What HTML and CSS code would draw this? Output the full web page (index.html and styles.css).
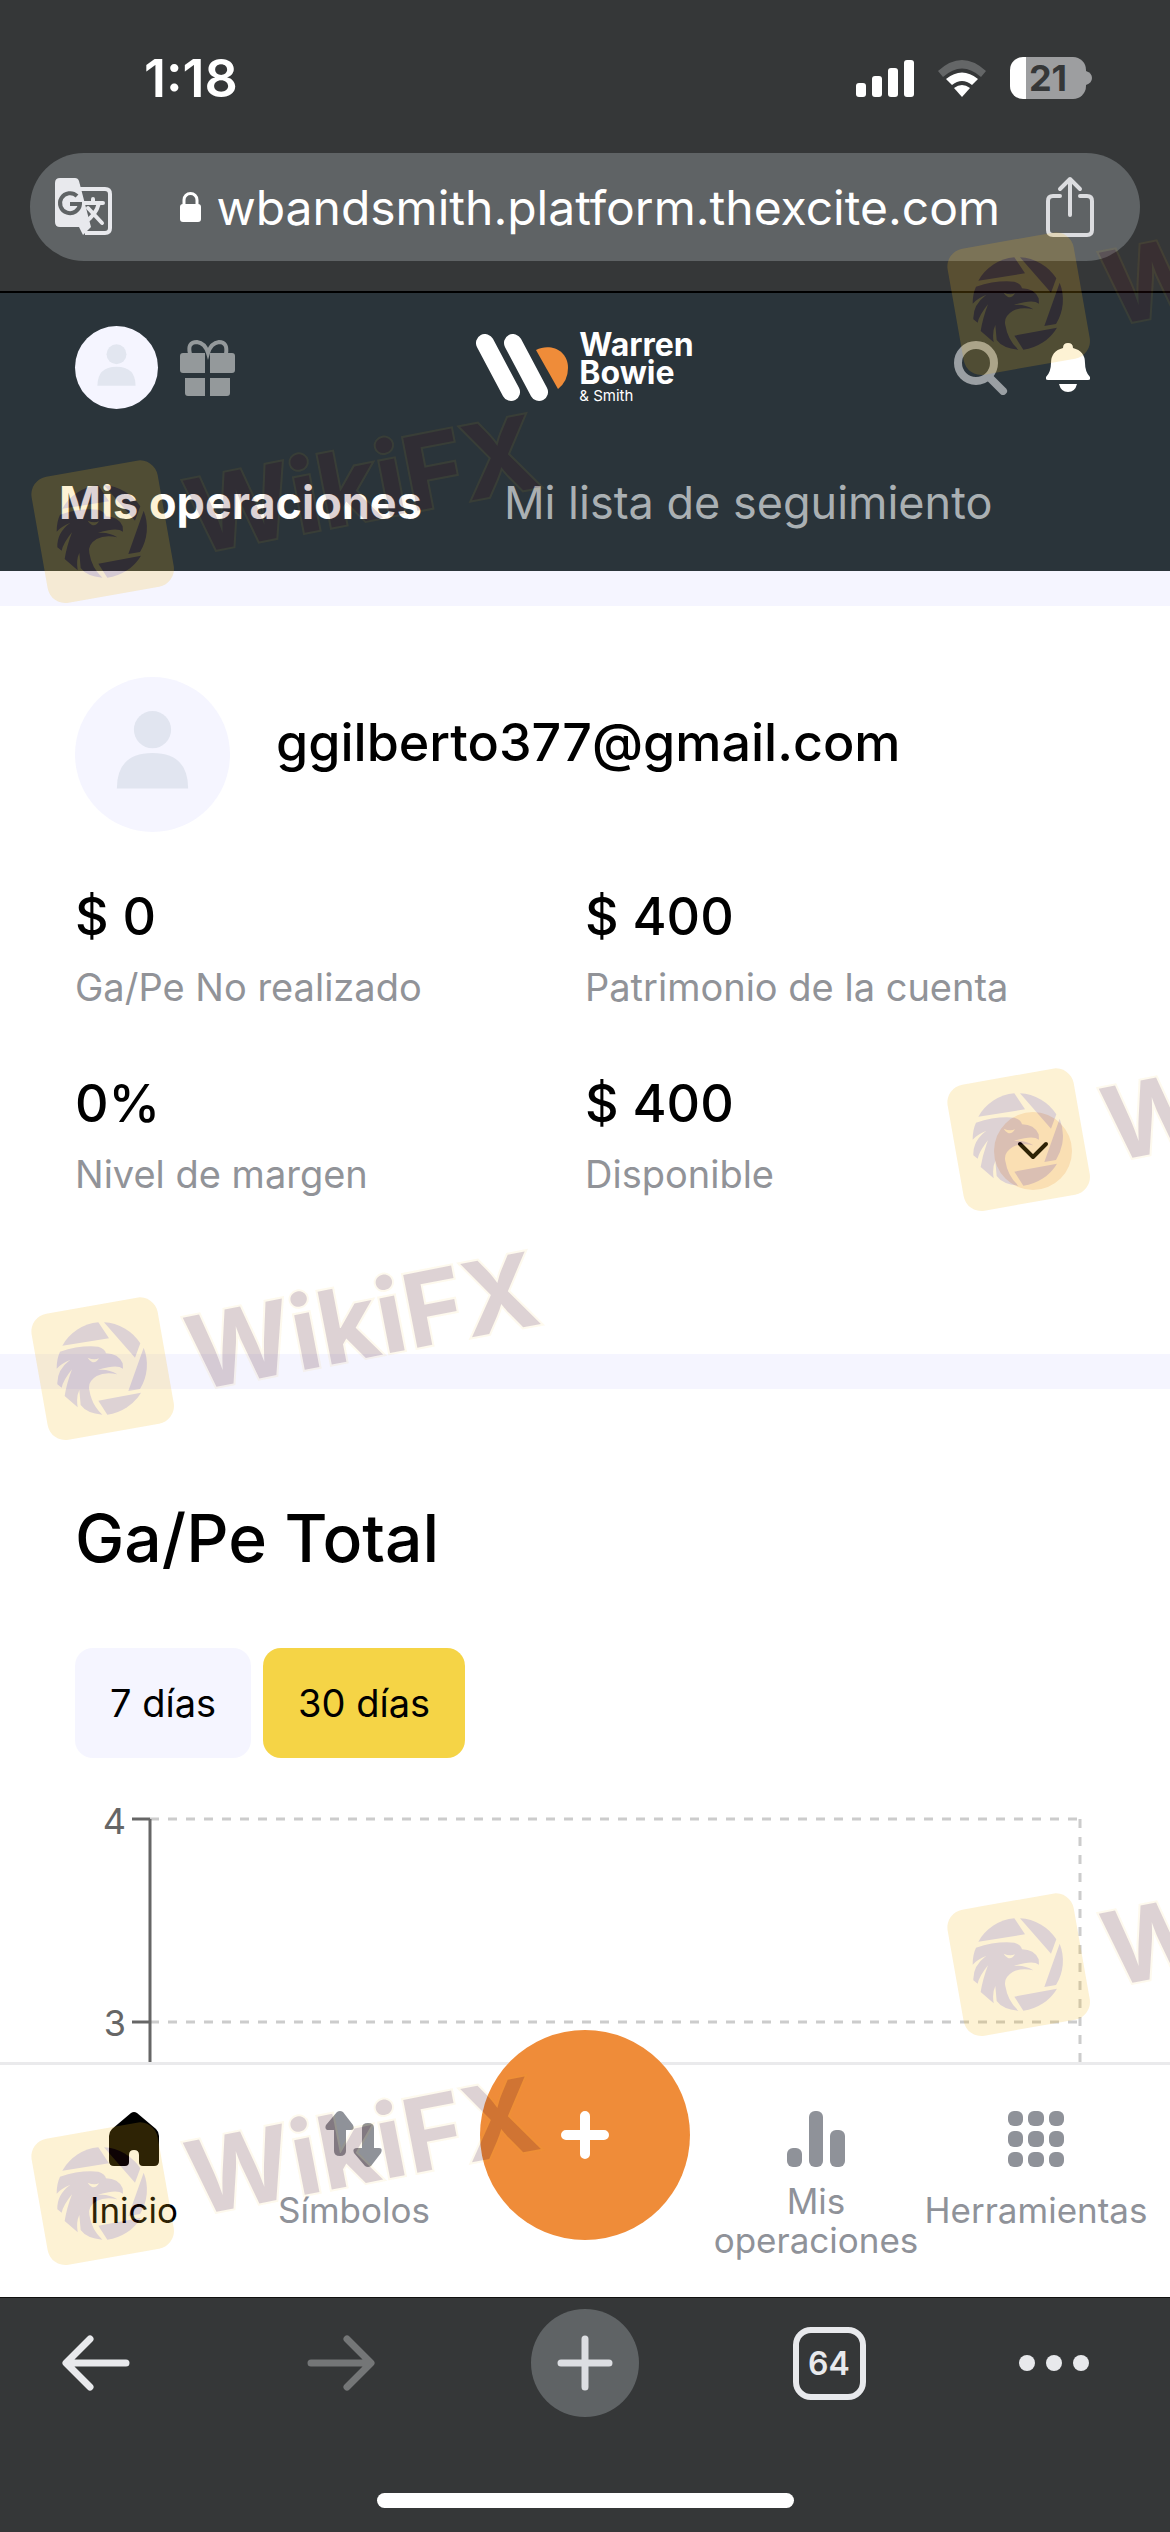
FILE: index.html
```html
<!DOCTYPE html>
<html lang="es">
<head>
    <meta charset="UTF-8">
    <meta name="viewport" content="width=device-width, initial-scale=1.0">
    <title>Warren Bowie &amp; Smith</title>
    <link rel="stylesheet" href="styles.css">
</head>
<body>

<!-- Browser top -->
<div class="browser-top">
    <div class="status-bar">
        <span class="time">1:18</span>
        <div class="status-icons">
            <svg width="58" height="38" viewBox="0 0 58 38" fill="#fff">
                <rect x="0" y="24" width="10" height="14" rx="3"/>
                <rect x="16" y="17" width="10" height="21" rx="3"/>
                <rect x="32" y="9" width="10" height="29" rx="3"/>
                <rect x="48" y="1" width="10" height="37" rx="3"/>
            </svg>
            <svg class="wifi" width="50" height="38" viewBox="0 0 50 38">
                <path d="M1 12 Q25 -10 49 12 L44 18 Q25 1 6 18 Z" fill="#646667"/>
                <path d="M9 20 Q25 7 41 20 L35 26 Q25 18 15 26 Z" fill="#fff"/>
                <path d="M17 29 Q25 23 33 29 L25 38 Z" fill="#fff"/>
            </svg>
            <div class="battery"><span>21</span></div>
            <svg width="6" height="14" viewBox="0 0 6 14"><path d="M0 0 Q6 2 6 7 Q6 12 0 14 Z" fill="#9d9ea0"/></svg>
        </div>
    </div>
    <div class="url-bar">
        <button class="icon-btn" aria-label="Traducir">
            <svg width="58" height="58" viewBox="0 0 58 58">
                <path d="M24 11 H50 Q55 11 55 16 V50 Q55 55 50 55 H30" fill="none" stroke="#e8e9ed" stroke-width="4"/>
                <path d="M5 0 H20 Q23 0 24 3 L36 49 L28 57 L24 49 H5 Q0 49 0 44 V5 Q0 0 5 0 Z" fill="#e8e9ed"/>
                <path d="M22 18 A10 10 0 1 0 25 26 H15" fill="none" stroke="#5f6365" stroke-width="4"/>
                <path d="M29 25 H48 M38 21 V25 M44 25 Q41 37 30 44 M33 30 L47 45" fill="none" stroke="#e8e9ed" stroke-width="4" stroke-linecap="round"/>
            </svg>
        </button>
        <div class="url">
            <svg width="22" height="30" viewBox="0 0 22 30">
                <rect x="0" y="12" width="21" height="18" rx="3" fill="#fff"/>
                <path d="M4 13 V8 A6 6 0 0 1 17 8 V13" fill="none" stroke="#fff" stroke-width="3"/>
            </svg>
            <span>wbandsmith.platform.thexcite.com</span>
        </div>
        <button class="icon-btn" aria-label="Compartir">
            <svg width="48" height="62" viewBox="0 0 48 62" fill="none" stroke="#dcdde0" stroke-width="4" stroke-linecap="round" stroke-linejoin="round">
                <path d="M14 20 H7 Q2 20 2 25 V54 Q2 59 7 59 H41 Q46 59 46 54 V25 Q46 20 41 20 H34"/>
                <path d="M24 39 V3 M14 13 L24 3 L34 13"/>
            </svg>
        </button>
    </div>
</div>

<header class="app-header">
    <div class="header-row">
        <div class="header-side">
            <button class="avatar avatar-small" aria-label="Perfil">
                <svg viewBox="0 0 100 100" fill="#e2e6f0"><circle cx="50" cy="34" r="12"/><path d="M27 72 Q27 49 50 49 Q73 49 73 72 Z"/></svg>
            </button>
            <button class="icon-btn" aria-label="Regalos">
                <svg width="56" height="56" viewBox="0 0 56 56" fill="#94999b">
                    <path d="M3 13 H25 V33 H3 Q0 33 0 30 V16 Q0 13 3 13 Z M30 13 H52 Q55 13 55 16 V30 Q55 33 52 33 H30 Z"/>
                    <path d="M5 38 H25 V56 H8 Q5 56 5 53 Z M30 38 H50 V53 Q50 56 47 56 H30 Z"/>
                    <path d="M10 14 Q7 2 17 2 Q25 3 28 13 Q31 3 39 2 Q48 2 46 14" fill="none" stroke="#94999b" stroke-width="4"/>
                </svg>
            </button>
        </div>
        <a class="logo" href="#">
            <svg width="93" height="68" viewBox="0 0 93 68">
                <path d="M9 9 L35 58 M37 9 L63 58" stroke="#fff" stroke-width="18" stroke-linecap="round"/>
                <path d="M60 16 C74 9 92 16 92 34 Q92 47 82 55 Z" fill="#ef8c39"/>
            </svg>
            <span class="logo-text">
                <strong>Warren</strong>
                <strong>Bowie</strong>
                <small>&amp; Smith</small>
            </span>
        </a>
        <div class="header-side header-right">
            <button class="icon-btn" aria-label="Buscar">
                <svg width="54" height="54" viewBox="0 0 54 54" fill="none" stroke="#9a9fa3" stroke-linecap="round">
                    <circle cx="22" cy="22" r="18" stroke-width="8"/>
                    <path d="M36 37 L49 50" stroke-width="8"/>
                </svg>
            </button>
            <button class="icon-btn" aria-label="Notificaciones">
                <svg width="44" height="50" viewBox="0 0 44 50" fill="#fff">
                    <path d="M22 0 Q27 0 27 5 Q39 8 39 20 Q39 29 44 34 Q45 37 42 37 H2 Q-1 37 0 34 Q5 29 5 20 Q5 8 17 5 Q17 0 22 0 Z"/>
                    <path d="M13 41 H31 Q29 49 22 49 Q15 49 13 41 Z"/>
                </svg>
            </button>
        </div>
    </div>
    <nav class="tabs">
        <a class="tab active" href="#">Mis operaciones</a>
        <a class="tab" href="#">Mi lista de seguimiento</a>
    </nav>
</header>

<main>
    <section class="profile">
        <div class="user">
            <div class="avatar avatar-big">
                <svg viewBox="0 0 100 100" fill="#e1e5f0"><circle cx="50" cy="34" r="12"/><path d="M27 72 Q27 49 50 49 Q73 49 73 72 Z"/></svg>
            </div>
            <h2>ggilberto377@gmail.com</h2>
        </div>
        <div class="stats">
            <div class="stat">
                <p class="value">$ 0</p>
                <p class="label">Ga/Pe No realizado</p>
            </div>
            <div class="stat">
                <p class="value">$ 400</p>
                <p class="label">Patrimonio de la cuenta</p>
            </div>
            <div class="stat">
                <p class="value">0%</p>
                <p class="label">Nivel de margen</p>
            </div>
            <div class="stat stat-more">
                <div>
                    <p class="value">$ 400</p>
                    <p class="label">Disponible</p>
                </div>
                <button class="more-btn" aria-label="Ver más">
                    <svg width="32" height="20" viewBox="0 0 32 20"><path d="M3 3 L16 16 L29 3" fill="none" stroke="#000" stroke-width="4" stroke-linecap="round" stroke-linejoin="round"/></svg>
                </button>
            </div>
        </div>
    </section>

    <section class="total">
        <h1>Ga/Pe Total</h1>
        <div class="periods">
            <button>7 días</button>
            <button class="selected">30 días</button>
        </div>
        <svg class="chart" width="100%" height="850">
            <g class="grid-lines">
                <line x1="75" y1="20" x2="100%" y2="20"/>
                <line x1="75" y1="223" x2="100%" y2="223"/>
                <line x1="75" y1="426" x2="100%" y2="426"/>
                <line x1="75" y1="629" x2="100%" y2="629"/>
                <line x1="100%" y1="20" x2="100%" y2="832"/>
            </g>
            <g class="axis">
                <line x1="75" y1="20" x2="75" y2="832"/>
                <line x1="57" y1="20" x2="75" y2="20"/>
                <line x1="57" y1="223" x2="75" y2="223"/>
                <line x1="57" y1="426" x2="75" y2="426"/>
                <line x1="57" y1="629" x2="75" y2="629"/>
            </g>
            <g class="ticks">
                <text x="51" y="35">4</text>
                <text x="51" y="237">3</text>
            </g>
        </svg>
    </section>
</main>

<nav class="bottom-nav">
    <a class="nav-item active" href="#">
        <svg width="50" height="56" viewBox="0 0 50 56"><path d="M22 2 Q25 0 28 2 L47 18 Q50 21 50 25 V50 Q50 55 45 55 H34 Q30 55 30 51 V44 Q30 39 25 39 Q20 39 20 44 V51 Q20 55 16 55 H5 Q0 55 0 50 V25 Q0 21 3 18 Z"/></svg>
        <span>Inicio</span>
    </a>
    <a class="nav-item" href="#">
        <svg width="58" height="56" viewBox="0 0 58 56">
            <path d="M12 1 Q15 -1 18 1 L28 14 Q30 19 26 19 H21 V40 Q21 45 15 45 Q9 45 9 40 V19 H4 Q-1 19 1 14 Z"/>
            <path d="M40 55 Q43 57 46 55 L56 42 Q58 37 54 37 H49 V17 Q49 12 43 12 Q37 12 37 17 V37 H32 Q27 37 29 42 Z"/>
        </svg>
        <span>Símbolos</span>
    </a>
    <button class="add-btn" aria-label="Nueva operación">
        <svg width="48" height="48" viewBox="0 0 48 48"><path d="M24 5 V43 M5 24 H43" stroke="#fff" stroke-width="10" stroke-linecap="round"/></svg>
    </button>
    <a class="nav-item" href="#">
        <svg width="58" height="56" viewBox="0 0 58 56">
            <rect x="0" y="37" width="15" height="19" rx="6"/>
            <rect x="22" y="0" width="14" height="56" rx="6"/>
            <rect x="43" y="19" width="15" height="37" rx="6"/>
        </svg>
        <span class="two-lines">Mis<br>operaciones</span>
    </a>
    <a class="nav-item" href="#">
        <svg width="56" height="56" viewBox="0 0 56 56">
            <rect x="0" y="0" width="15" height="15" rx="6"/><rect x="20" y="0" width="16" height="15" rx="6"/><rect x="41" y="0" width="15" height="15" rx="6"/>
            <rect x="0" y="20" width="15" height="16" rx="6"/><rect x="20" y="20" width="16" height="16" rx="6"/><rect x="41" y="20" width="15" height="16" rx="6"/>
            <rect x="0" y="41" width="15" height="15" rx="6"/><rect x="20" y="41" width="16" height="15" rx="6"/><rect x="41" y="41" width="15" height="15" rx="6"/>
        </svg>
        <span>Herramientas</span>
    </a>
</nav>

<!-- Browser toolbar -->
<div class="toolbar">
    <div class="toolbar-row">
        <button class="icon-btn back" aria-label="Atrás">
            <svg width="68" height="56" viewBox="0 0 68 56" fill="none" stroke="#e8e9ec" stroke-width="7" stroke-linecap="round" stroke-linejoin="round"><path d="M64 28 H5 M28 4 L4 28 L28 52"/></svg>
        </button>
        <button class="icon-btn" aria-label="Adelante">
            <svg width="68" height="56" viewBox="0 0 68 56" fill="none" stroke="#747677" stroke-width="7" stroke-linecap="round" stroke-linejoin="round"><path d="M4 28 H63 M40 4 L64 28 L40 52"/></svg>
        </button>
        <button class="new-tab" aria-label="Nueva pestaña">
            <svg width="56" height="56" viewBox="0 0 56 56"><path d="M28 4 V52 M4 28 H52" stroke="#dcdee2" stroke-width="7" stroke-linecap="round"/></svg>
        </button>
        <button class="tab-count">64</button>
        <button class="icon-btn more" aria-label="Más">
            <svg width="70" height="16" viewBox="0 0 70 16" fill="#e8e9ec"><circle cx="8" cy="8" r="8"/><circle cx="35" cy="8" r="8"/><circle cx="62" cy="8" r="8"/></svg>
        </button>
    </div>
    <div class="home-indicator"></div>
</div>

<!-- Eagle badge, reused by every watermark -->
<svg class="defs" width="0" height="0">
    <symbol id="eagle" viewBox="0 0 450 480">
        <rect x="26" y="44" width="384" height="384" rx="54" transform="rotate(-10 218 236)" fill="#f3b91e"/>
        <g fill="#4c101c">
            <path d="M97 167 A138 138 0 0 1 205 97 L237 145 Z"/>
            <path d="M222 97 A138 138 0 0 1 331 160 L315 203 Z"/>
            <path d="M341 173 A138 138 0 0 1 330 297 L295 303 Z"/>
            <path d="M333 308 A138 138 0 0 1 232 374 L205 332 Z"/>
            <path d="M90 185 Q150 165 205 170 Q225 176 228 190 Q265 190 278 220 L279 236 Q265 226 235 232 Q215 236 204 240 Q235 236 262 253 Q225 245 200 258 Q172 275 178 300 Q185 345 217 374 Q170 370 152 345 L148 300 Q138 320 143 352 L104 318 Q110 280 126 238 Q100 270 95 293 L82 283 Q80 240 120 210 Q95 220 80 236 Q80 205 90 185 Z"/>
        </g>
        <path d="M173 203 Q192 212 207 205 Q198 220 186 216 Q178 212 173 203 Z" fill="#f3b91e"/>
    </symbol>
</svg>
<div class="watermarks">
    <div class="watermark left row-1"><svg><use href="#eagle"/></svg><span>WikiFX</span></div>
    <div class="watermark left row-2"><svg><use href="#eagle"/></svg><span>WikiFX</span></div>
    <div class="watermark left row-3"><svg><use href="#eagle"/></svg><span>WikiFX</span></div>
    <div class="watermark right row-1"><svg><use href="#eagle"/></svg><span>WikiFX</span></div>
    <div class="watermark right row-2"><svg><use href="#eagle"/></svg><span>WikiFX</span></div>
    <div class="watermark right row-3"><svg><use href="#eagle"/></svg><span>WikiFX</span></div>
</div>

</body>
</html>
```
FILE: styles.css
```css
* {
    box-sizing: border-box;
}
body {
    font-family: Inter, 'Open Sans', Arial, sans-serif;
    margin: 0;
    height: 100vh;
    display: flex;
    flex-direction: column;
    overflow: hidden;
    background-color: #fff;
    color: #000;
}
h1, h2, p {
    margin: 0;
    font-weight: 500;
}
a {
    color: inherit;
    text-decoration: none;
}
button {
    font-family: inherit;
    color: inherit;
    border: none;
    padding: 0;
    background: none;
    cursor: pointer;
}
svg {
    display: block;
    flex-shrink: 0;
}
.icon-btn {
    display: flex;
    align-items: center;
    justify-content: center;
}

/* Browser top */
.browser-top {
    background-color: #353738;
    color: #fff;
    padding: 48px 30px 30px;
    border-bottom: 2px solid #000;
}
.status-bar {
    display: flex;
    justify-content: space-between;
    align-items: center;
    height: 60px;
    margin-bottom: 45px;
    padding: 0 48px 0 114px;
}
.time {
    font-size: 52px;
    font-weight: 600;
}
.status-icons {
    display: flex;
    align-items: center;
}
.wifi {
    margin: 0 23px;
}
.battery {
    width: 76px;
    height: 42px;
    border-radius: 13px;
    background: linear-gradient(to right, #fff 21%, #9d9ea0 21%);
    color: #353738;
    font-size: 36px;
    font-weight: 700;
    line-height: 42px;
    text-align: center;
}
.url-bar {
    display: flex;
    align-items: center;
    height: 108px;
    padding: 0 46px 0 25px;
    border-radius: 54px;
    background-color: #5f6365;
}
.url {
    display: flex;
    flex: 1;
    align-items: center;
    justify-content: flex-end;
    gap: 14px;
    padding-right: 46px;
    font-size: 48px;
}

/* App header */
.app-header {
    background-color: #2a343a;
    color: #fff;
    padding: 33px 75px 38px;
}
.header-row {
    display: grid;
    grid-template-columns: 1fr auto 1fr;
    align-items: center;
    height: 82px;
}
.header-side {
    display: flex;
    align-items: center;
    gap: 22px;
}
.header-right {
    justify-content: flex-end;
    gap: 38px;
    padding-right: 5px;
}
.avatar {
    border-radius: 50%;
    background-color: #f5f5ff;
}
.avatar-small {
    width: 83px;
    height: 83px;
}
.avatar-big {
    width: 155px;
    height: 155px;
}
.logo {
    display: flex;
    align-items: center;
    gap: 10px;
}
.logo-text {
    display: flex;
    flex-direction: column;
}
.logo-text strong {
    font-size: 32px;
    line-height: 28px;
}
.logo-text small {
    font-size: 15px;
    line-height: 18px;
}
.tabs {
    display: flex;
    gap: 82px;
    margin: 65px -16px 0;
    font-size: 45px;
    line-height: 60px;
    white-space: nowrap;
}
.tab {
    color: #aab0b3;
}
.tab.active {
    color: #fff;
    font-weight: 700;
}

/* Content */
main {
    flex: 1;
    min-height: 0;
    overflow: hidden;
}
.profile {
    padding: 71px 75px 156px;
    border-top: 35px solid #f5f5ff;
    border-bottom: 35px solid #f5f5ff;
}
.user {
    display: flex;
    align-items: center;
    gap: 46px;
}
.user h2 {
    font-size: 52px;
    line-height: 60px;
    padding-bottom: 24px;
}
.stats {
    display: grid;
    grid-template-columns: 1fr 1fr;
    row-gap: 63px;
    margin-top: 55px;
}
.value {
    font-size: 52px;
    line-height: 60px;
    margin-bottom: 16px;
}
.label {
    font-size: 38px;
    font-weight: 400;
    line-height: 48px;
    color: #919398;
}
.stat-more {
    display: flex;
    justify-content: space-between;
    align-items: flex-end;
}
.more-btn {
    display: flex;
    align-items: center;
    justify-content: center;
    width: 78px;
    height: 78px;
    margin: 0 23px 8px 0;
    border-radius: 50%;
    background-color: #fce8d7;
}
.total {
    padding: 109px 90px 0 75px;
}
.total h1 {
    font-size: 66px;
    line-height: 80px;
}
.periods {
    display: flex;
    gap: 12px;
    margin: 70px 0 41px;
}
.periods button {
    height: 110px;
    padding: 0 35px;
    border-radius: 18px;
    background-color: #f5f5ff;
    font-size: 38px;
}
.periods .selected {
    background-color: #f5d446;
}
.chart {
    overflow: visible;
}
.grid-lines line {
    stroke: #ccc;
    stroke-width: 3;
    stroke-dasharray: 9 9;
}
.axis line {
    stroke: #666;
    stroke-width: 3;
}
.ticks text {
    fill: #666;
    font-size: 36px;
    text-anchor: end;
}

/* Bottom navigation */
.bottom-nav {
    position: relative;
    display: grid;
    grid-template-columns: minmax(0, 1fr) minmax(0, 1fr) 242px minmax(0, 1fr) minmax(0, 1fr);
    justify-items: center;
    align-items: start;
    height: 235px;
    padding: 0 24px;
    border-top: 3px solid #eaeaec;
    background-color: #fff;
}
.nav-item {
    display: flex;
    flex-direction: column;
    align-items: center;
    gap: 24px;
    padding-top: 46px;
    color: #8f9299;
    fill: #8f9299;
    font-size: 35px;
    line-height: 39px;
    text-align: center;
}
.nav-item.active {
    color: #000;
    fill: #000;
}
.nav-item .two-lines {
    margin-top: -9px;
}
.add-btn {
    display: flex;
    align-items: center;
    justify-content: center;
    width: 210px;
    height: 210px;
    margin-top: -35px;
    border-radius: 50%;
    background-color: #ef8c39;
}

/* Browser toolbar */
.toolbar {
    display: flex;
    flex-direction: column;
    justify-content: space-between;
    align-items: center;
    height: 235px;
    padding: 11px 0 24px;
    border-top: 1px solid #111;
    background-color: #353738;
}
.toolbar-row {
    display: grid;
    grid-template-columns: 1fr 244px 244px 244px 1fr;
    justify-items: center;
    align-items: center;
    width: 100%;
}
.back {
    padding-right: 28px;
}
.more {
    padding-right: 14px;
}
.new-tab {
    display: flex;
    align-items: center;
    justify-content: center;
    width: 108px;
    height: 108px;
    border-radius: 50%;
    background-color: #5f6365;
}
.tab-count {
    width: 73px;
    height: 73px;
    border: 6px solid #e8e9ec;
    border-radius: 18px;
    color: #e8e9ec;
    font-size: 32px;
    font-weight: 600;
}
.home-indicator {
    width: 417px;
    height: 15px;
    border-radius: 8px;
    background-color: #fff;
}

/* Watermarks */
.defs {
    position: absolute;
}
.watermarks {
    position: fixed;
    inset: 0;
    overflow: hidden;
    pointer-events: none;
}
.watermark {
    position: absolute;
    display: flex;
    gap: 26px;
    opacity: 0.19;
}
.watermark svg {
    width: 150px;
    height: 160px;
}
.watermark span {
    color: #4c101c;
    font-size: 102px;
    font-weight: 700;
    line-height: 126px;
    transform: rotate(-11deg);
    transform-origin: 0 100%;
    -webkit-text-stroke: 4px rgba(243, 185, 30, 0.4);
    paint-order: stroke;
}
.left {
    left: 30px;
}
.right {
    left: 946px;
}
.left.row-1 {
    top: 453px;
}
.left.row-2 {
    top: 1290px;
}
.left.row-3 {
    top: 2115px;
}
.right.row-1 {
    top: 225px;
}
.right.row-2 {
    top: 1061px;
}
.right.row-3 {
    top: 1886px;
}
```
